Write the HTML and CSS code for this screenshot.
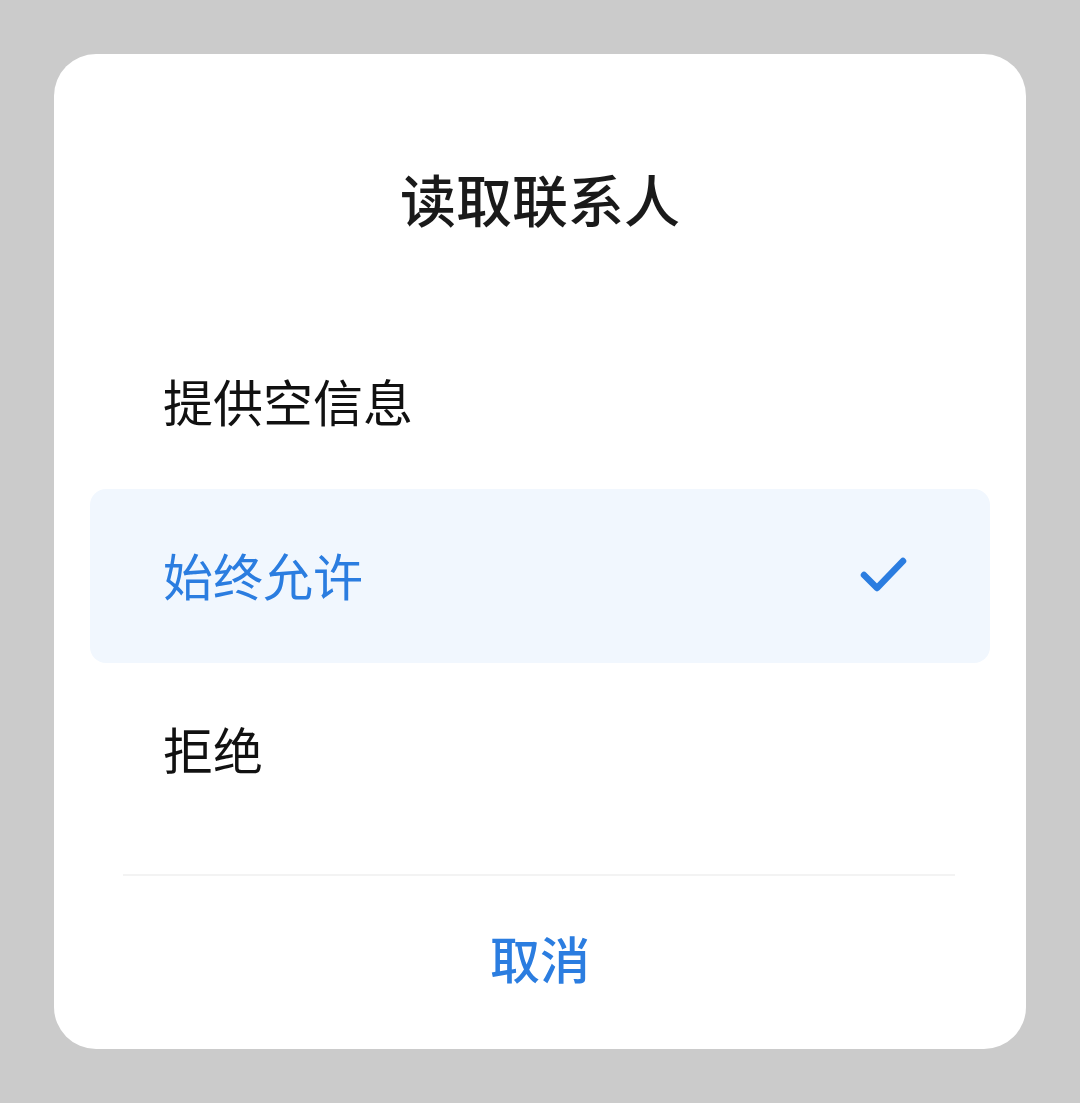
FILE: index.html
```html
<!DOCTYPE html>
<html lang="zh-CN">
<head>
    <meta charset="UTF-8">
    <meta name="viewport" content="width=device-width, initial-scale=1.0">
    <title>读取联系人</title>
    <link rel="stylesheet" href="styles.css">
</head>
<body>

<div class="dialog">
    <!-- Title -->
    <div class="dialog-title">读取联系人</div>

    <!-- Options -->
    <div class="option">提供空信息</div>
    <div class="option selected">
        <span>始终允许</span>
        <svg class="check" width="48" height="48" viewBox="0 0 48 48">
            <path d="M5 23 L18 36 L44 9" fill="none" stroke="#2b7de0" stroke-width="6.5" stroke-linecap="round" stroke-linejoin="round"/>
        </svg>
    </div>
    <div class="option">拒绝</div>

    <div class="divider"></div>

    <!-- Cancel button -->
    <div class="cancel">取消</div>
</div>

</body>
</html>
```

FILE: styles.css
```css
body {
    margin: 0;
    height: 1103px;
    background-color: #cbcbcb;
    font-family: "Noto Sans CJK SC", "Noto Sans", sans-serif;
    overflow: hidden;
}

.dialog {
    margin: 54px 0 0 54px;
    width: 972px;
    height: 995px;
    background: #ffffff;
    border-radius: 42px;
    display: flex;
    flex-direction: column;
}

.dialog-title {
    margin-top: 104px;
    margin-bottom: 77px;
    height: 80px;
    line-height: 80px;
    text-align: center;
    font-size: 56px;
    font-weight: 500;
    color: #1a1a1a;
}

.option {
    margin: 0 36px;
    height: 174px;
    padding: 0 83px 4px 73px;
    box-sizing: border-box;
    display: flex;
    align-items: center;
    justify-content: space-between;
    font-size: 50px;
    color: #111111;
    border-radius: 16px;
}

.option.selected {
    background-color: #f1f7fe;
    color: #2b7de0;
}

.check {
    display: block;
    margin-top: 4px;
}

.divider {
    margin: 37px 71px 0 69px;
    height: 2px;
    background-color: #f3f3f3;
}

.cancel {
    flex: 1;
    display: flex;
    align-items: center;
    justify-content: center;
    padding-bottom: 12px;
    font-size: 50px;
    font-weight: 500;
    color: #2b7de0;
}
```
